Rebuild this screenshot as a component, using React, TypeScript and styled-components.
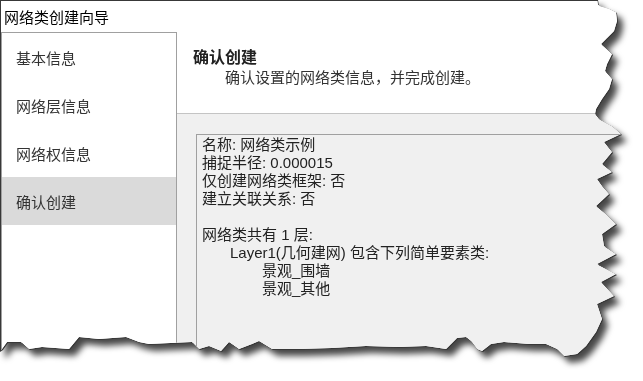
import React from 'react';
import styled, { createGlobalStyle } from 'styled-components';

// outline of the torn-off screenshot: top-left corner, ragged right side, ragged bottom
const edge: [number, number][] = [
 [0, 0], [598, 0], [599, 6], [609, 9], [617, 13], [618, 22], [615, 32], [608, 39], [602, 45],
 [613, 55], [608, 65], [606, 72], [613, 80], [610, 90], [603, 100], [597, 110], [596, 115],
 [600, 120], [613, 127], [622, 135], [605, 143], [613, 153], [603, 165], [613, 173], [598, 180],
 [603, 187], [610, 195], [597, 207], [608, 216], [617, 225], [603, 235], [605, 247], [617, 255],
 [598, 265], [617, 275], [602, 283], [615, 297], [598, 305], [603, 320], [597, 333], [587, 347],
 [578, 355], [565, 357], [558, 350], [547, 345], [530, 345], [505, 343], [492, 345], [483, 352],
 [478, 350], [472, 342], [467, 338], [458, 339], [447, 350], [427, 347], [400, 348], [367, 347],
 [333, 349], [300, 350], [273, 350], [260, 342], [253, 345], [240, 350], [230, 343], [222, 352],
 [210, 347], [200, 350], [193, 343], [150, 345], [140, 343], [127, 338], [100, 340], [80, 338],
 [70, 350], [43, 348], [30, 350], [22, 343], [8, 343], [3, 350], [0, 352],
];

const poly = (d: number) =>
 `polygon(${edge.map(([x, y]) => `${x - d}px ${y - d}px`).join(', ')})`;

const navItems = ['基本信息', '网络层信息', '网络权信息', '确认创建'];

const summary: { text: string; indent: number }[] = [
 { text: '名称: 网络类示例', indent: 0 },
 { text: '捕捉半径: 0.000015', indent: 0 },
 { text: '仅创建网络类框架: 否', indent: 0 },
 { text: '建立关联关系: 否', indent: 0 },
 { text: '', indent: 0 },
 { text: '网络类共有 1 层:', indent: 0 },
 { text: 'Layer1(几何建网) 包含下列简单要素类:', indent: 28 },
 { text: '景观_围墙', indent: 60 },
 { text: '景观_其他', indent: 60 },
];

function App() {
 return (
  <>
   <GlobalStyle />
   <Page>
    <Shadow>
     <Torn>
      <Window>
       <TitleBar>网络类创建向导</TitleBar>
       <Body>
        <Nav>
         {navItems.map((item, i) => (
          <NavItem key={item} active={i === navItems.length - 1}>
           {item}
          </NavItem>
         ))}
        </Nav>
        <Main>
         <Header>
          <StepTitle>确认创建</StepTitle>
          <StepDesc>确认设置的网络类信息，并完成创建。</StepDesc>
         </Header>
         <Content>
          <SummaryBox>
           {summary.map((line, i) => (
            <Line key={i} indent={line.indent}>
             {line.text || '\u00a0'}
            </Line>
           ))}
          </SummaryBox>
         </Content>
        </Main>
       </Body>
      </Window>
     </Torn>
    </Shadow>
   </Page>
  </>
 );
}

export default App;

/* Styled Components */

const GlobalStyle = createGlobalStyle`
 html, body {
  margin: 0;
  padding: 0;
  background: #ffffff;
 }
 body {
  font-family: "Liberation Sans", "Noto Sans CJK SC", sans-serif;
 }
`;

const Page = styled.div`
 width: 643px;
 height: 381px;
 background: #ffffff;
 overflow: hidden;
`;

const Shadow = styled.div`
 width: 625px;
 height: 362px;
 filter: drop-shadow(5px 6px 3px rgba(0, 0, 0, 0.72));
`;

const Torn = styled.div`
 width: 625px;
 height: 362px;
 box-sizing: border-box;
 padding: 1px 0 0 1px;
 background: #383838;
 clip-path: ${poly(0)};
`;

const Window = styled.div`
 width: 624px;
 height: 361px;
 display: flex;
 flex-direction: column;
 background: #ffffff;
 clip-path: ${poly(2)};
`;

const TitleBar = styled.div`
 height: 31px;
 flex-shrink: 0;
 display: flex;
 align-items: center;
 padding-left: 3px;
 font-size: 15px;
 color: #000000;
 background: #ffffff;
`;

const Body = styled.div`
 flex: 1;
 display: flex;
 flex-direction: row;
`;

const Nav = styled.div`
 width: 176px;
 flex-shrink: 0;
 box-sizing: border-box;
 border: 1px solid #a0a0a0;
 border-bottom: none;
 background: #ffffff;
`;

const NavItem = styled.div<{ active?: boolean }>`
 height: 48px;
 display: flex;
 align-items: center;
 padding-left: 14px;
 font-size: 15px;
 color: #333333;
 background: ${(props) => (props.active ? '#dadada' : 'transparent')};
`;

const Main = styled.div`
 flex: 1;
 display: flex;
 flex-direction: column;
`;

const Header = styled.div`
 height: 81px;
 flex-shrink: 0;
 box-sizing: content-box;
 border-bottom: 1px solid #c4c4c4;
 background: #ffffff;
 padding-left: 16px;
`;

const StepTitle = styled.div`
 margin-top: 16px;
 font-size: 16px;
 line-height: 20px;
 font-weight: bold;
 color: #222222;
`;

const StepDesc = styled.div`
 margin-top: 0px;
 padding-left: 32px;
 font-size: 15px;
 line-height: 20px;
 color: #333333;
`;

const Content = styled.div`
 flex: 1;
 background: #f0f0f0;
 padding: 20px 0 0 19px;
`;

const SummaryBox = styled.div`
 height: 100%;
 box-sizing: border-box;
 border-top: 1px solid #a0a0a0;
 border-left: 1px solid #a0a0a0;
 padding: 1px 0 0 5px;
`;

const Line = styled.div<{ indent: number }>`
 padding-left: ${(props) => props.indent}px;
 font-size: 15px;
 line-height: 18px;
 color: #222222;
 white-space: nowrap;
`;
